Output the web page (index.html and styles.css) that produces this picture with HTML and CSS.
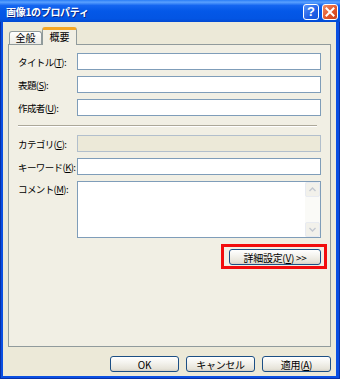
FILE: index.html
```html
<!DOCTYPE html>
<html lang="ja">
<head>
    <meta charset="UTF-8">
    <title>画像1のプロパティ</title>
    <link rel="stylesheet" href="styles.css">
</head>
<body>
    <div class="window">
        <!-- Title bar -->
        <div class="titlebar">
            <span class="title">画像1のプロパティ</span>
            <div class="title-buttons">
                <span class="tbtn help">?</span>
                <span class="tbtn close">
                    <svg width="10" height="10" viewBox="0 0 10 10">
                        <path d="M1.5 1.5 L8.5 8.5 M8.5 1.5 L1.5 8.5" stroke="#fff" stroke-width="2" stroke-linecap="square"/>
                    </svg>
                </span>
            </div>
        </div>

        <div class="client">
            <!-- Tabs -->
            <div class="tabs">
                <div class="tab">全般</div>
                <div class="tab active">概要</div>
            </div>

            <!-- Summary panel -->
            <div class="panel">
                <div class="row">
                    <label>タイトル(<u>T</u>):</label>
                    <div class="field"></div>
                </div>
                <div class="row">
                    <label>表題(<u>S</u>):</label>
                    <div class="field"></div>
                </div>
                <div class="row">
                    <label>作成者(<u>U</u>):</label>
                    <div class="field"></div>
                </div>

                <div class="sep"></div>

                <div class="row">
                    <label>カテゴリ(<u>C</u>):</label>
                    <div class="field disabled"></div>
                </div>
                <div class="row">
                    <label>キーワード(<u>K</u>):</label>
                    <div class="field"></div>
                </div>
                <div class="row memo-row">
                    <label>コメント(<u>M</u>):</label>
                    <div class="field memo">
                        <div class="memo-text"></div>
                        <div class="scrollbar">
                            <div class="sb-btn">
                                <svg width="7" height="5" viewBox="0 0 7 5"><path d="M0.5 4 L3.5 1 L6.5 4" fill="none" stroke="#C3C8D1" stroke-width="1.4"/></svg>
                            </div>
                            <div class="sb-track"></div>
                            <div class="sb-btn">
                                <svg width="7" height="5" viewBox="0 0 7 5"><path d="M0.5 1 L3.5 4 L6.5 1" fill="none" stroke="#C3C8D1" stroke-width="1.4"/></svg>
                            </div>
                        </div>
                    </div>
                </div>

                <div class="adv-row">
                    <div class="highlight">
                        <button class="btn adv">詳細設定(<u>V</u>) &gt;&gt;</button>
                    </div>
                </div>
            </div>

            <!-- Dialog buttons -->
            <div class="footer">
                <button class="btn">OK</button>
                <button class="btn">キャンセル</button>
                <button class="btn">適用(<u>A</u>)</button>
            </div>
        </div>
    </div>
</body>
</html>
```

FILE: styles.css
```css
/* Reset */
* {
    margin: 0;
    padding: 0;
    box-sizing: border-box;
}
body {
    font-family: "Noto Sans CJK JP", "Noto Sans", sans-serif;
    font-size: 10px;
    color: #000;
    background: #0A4FE2;
}
u {
    text-decoration: underline;
    text-underline-offset: 1px;
}

/* Window frame */
.window {
    width: 340px;
    height: 379px;
    display: flex;
    flex-direction: column;
    background: #0A4FE2;
    box-shadow: inset 1px 0 #0831A8, inset -1px 0 #0831A8, inset 0 -1px #0831A8;
}

/* Title bar */
.titlebar {
    height: 22px;
    display: flex;
    justify-content: space-between;
    align-items: center;
    padding: 0 2px 0 6px;
    background: linear-gradient(to bottom, #2A7DF6 0%, #5AA1FF 10%, #1566F0 25%, #0458E8 50%, #0355E3 85%, #0249D2 100%);
}
.title {
    color: #fff;
    font-weight: bold;
    font-size: 10px;
    letter-spacing: -0.3px;
    text-shadow: 1px 1px #0B2A8C;
}
.title-buttons {
    display: flex;
    gap: 3px;
    padding-top: 1px;
}
.tbtn {
    width: 16px;
    height: 16px;
    border: 1px solid #fff;
    border-radius: 3px;
    display: flex;
    align-items: center;
    justify-content: center;
}
.help {
    background: linear-gradient(135deg, #5B94F8, #1F5FE6 60%, #1553D9);
    color: #fff;
    font-family: "Liberation Sans", sans-serif;
    font-weight: bold;
    font-size: 13px;
    line-height: 1;
}
.close {
    background: linear-gradient(135deg, #F0906A, #E2562A 55%, #C8401A);
}

/* Client area */
.client {
    flex: 1;
    display: flex;
    flex-direction: column;
    margin: 0 4px 3px 3px;
    padding: 6px 5px 0;
    background: #ECE9D8;
}

/* Tabs */
.tabs {
    height: 16px;
    display: flex;
    align-items: flex-end;
    padding-left: 1px;
}
.tab {
    width: 33px;
    height: 13px;
    border: 1px solid #919B9C;
    border-bottom: none;
    border-radius: 3px 3px 0 0;
    background: linear-gradient(to bottom, #FFFFFF, #ECEBE5);
    text-align: center;
    line-height: 12px;
}
.tab.active {
    width: 35px;
    height: 18px;
    margin-bottom: -1px;
    border-top: 3px solid #F5A623;
    background: #F1EFE4;
    position: relative;
    z-index: 1;
    line-height: 14px;
}

/* Panel */
.panel {
    flex: 1;
    border: 1px solid #919B9C;
    background: #F1EFE4;
    padding: 8px 9px 0 9px;
    display: flex;
    flex-direction: column;
    gap: 6px;
}
.row {
    display: flex;
    align-items: center;
    height: 17px;
}
.row label {
    width: 59px;
    flex-shrink: 0;
    white-space: nowrap;
    font-size: 9.5px;
    letter-spacing: -0.6px;
}
.field {
    flex: 1;
    height: 17px;
    border: 1px solid #7F9DB9;
    background: #fff;
}
.field.disabled {
    background: #ECE9D8;
    border-color: #B2BFCC;
}
.sep {
    height: 2px;
    margin: 3px 4px 2px 0;
    border-top: 1px solid #ACA899;
    border-bottom: 1px solid #fff;
}
.memo-row {
    height: 57px;
    align-items: flex-start;
}
.memo-row label {
    padding-top: 1px;
}
.field.memo {
    height: 57px;
    display: flex;
}
.memo-text {
    flex: 1;
}
.scrollbar {
    width: 15px;
    display: flex;
    flex-direction: column;
    background: #FAFAF7;
}
.sb-btn {
    height: 15px;
    border: 1px solid #E8EBF1;
    border-radius: 2px;
    background: #F2F1EB;
    display: flex;
    align-items: center;
    justify-content: center;
}
.sb-track {
    flex: 1;
}

/* Advanced button with red highlight */
.adv-row {
    display: flex;
    justify-content: flex-end;
    margin-right: -6px;
}
.highlight {
    border: 3px solid #F20D0D;
    padding: 2px 3px 1px 5px;
}

/* Buttons */
.btn {
    display: block;
    width: 69px;
    height: 16px;
    border: 1px solid #1C4F85;
    border-radius: 3px;
    background: linear-gradient(to bottom, #FFFFFF 0%, #F4F3EE 40%, #E6E3D8 85%, #D6D0C5 100%);
    font-family: inherit;
    font-size: 10px;
    color: #000;
    line-height: 13px;
    letter-spacing: -0.3px;
}
.btn.adv {
    width: 92px;
}
.footer {
    height: 29px;
    display: flex;
    justify-content: flex-end;
    gap: 7px;
    padding-top: 9px;
}
```
